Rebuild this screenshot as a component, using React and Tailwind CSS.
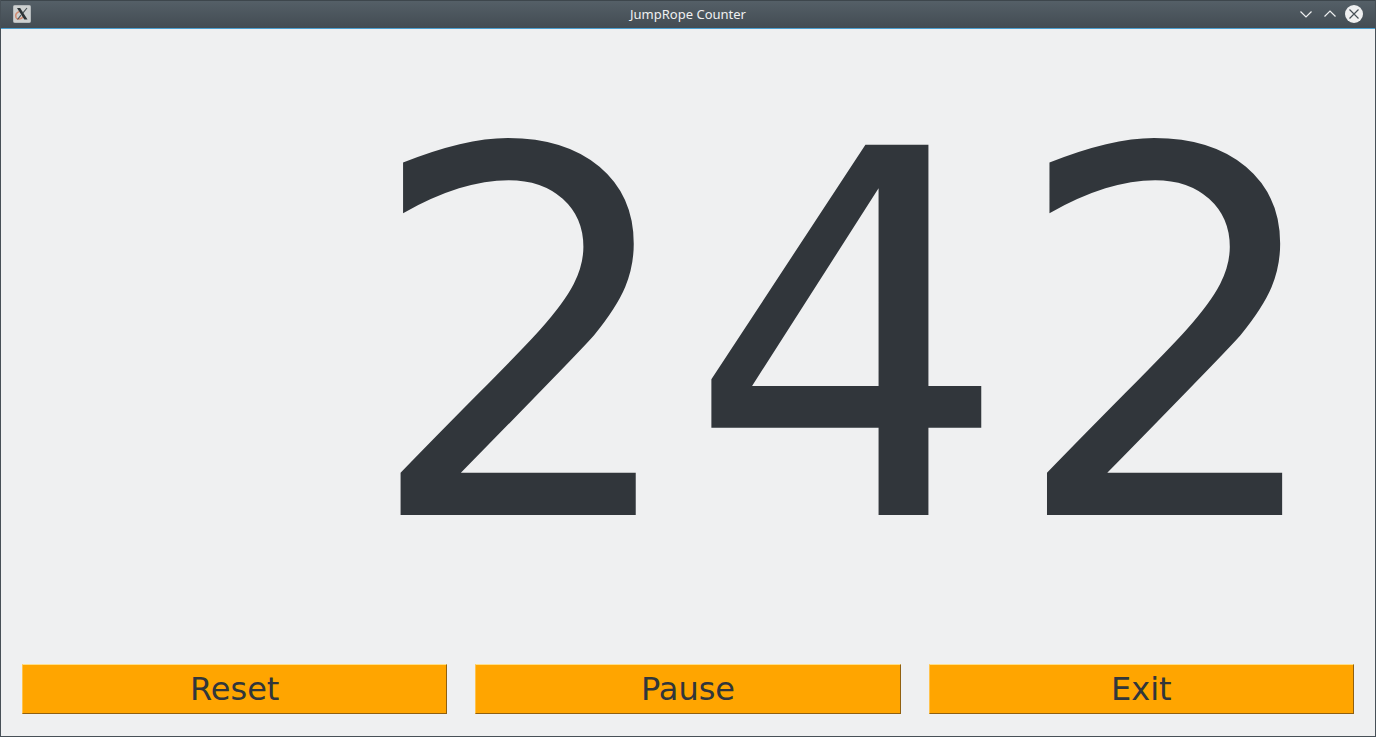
import { useState } from "react";

function AppIcon() {
  return (
    <svg className="size-[18px]" viewBox="0 0 18 18" aria-hidden="true">
      <rect x="0.5" y="0.5" width="17" height="17" rx="1" fill="#cdd0d0" stroke="#b4b9bb" />
      <path d="M6.5 6.5C3.5 7.5 2.2 10 3 12.5C4 15 8 14.5 10.5 11.5" fill="none" stroke="#d08a70" strokeWidth="1.5" />
      <path d="M4 3H7.2L14.5 14.5H11.3Z" fill="#2b3336" />
      <path d="M14 3L9.8 8.2M8 10.2L4.5 14.5" fill="none" stroke="#4a5356" strokeWidth="1.1" />
    </svg>
  );
}

function TitleBar({ title }) {
  return (
    <header className="grid h-[29px] grid-cols-[1fr_auto_1fr] items-center border-b border-[#4b9fd0] bg-linear-to-b from-[#556068] to-[#434c53] px-3 shadow-[inset_0_1px_0_#3d464c]">
      <AppIcon />
      <h1 className="font-['Noto_Sans',sans-serif] text-[13px] leading-[18px] text-[#eff0f1]">{title}</h1>
      <div className="flex items-center justify-end gap-1.5">
        <button type="button" aria-label="Minimize" className="size-[18px]">
          <svg viewBox="0 0 18 18" fill="none" stroke="#eff0f1" strokeWidth="1.2">
            <path d="M3.5 6.5L9 12L14.5 6.5" />
          </svg>
        </button>
        <button type="button" aria-label="Maximize" className="size-[18px]">
          <svg viewBox="0 0 18 18" fill="none" stroke="#eff0f1" strokeWidth="1.2">
            <path d="M3.5 11.5L9 6L14.5 11.5" />
          </svg>
        </button>
        <button type="button" aria-label="Close" className="size-[18px]">
          <svg viewBox="0 0 18 18" fill="none">
            <circle cx="9" cy="9" r="9" fill="#eff0f1" />
            <path d="M4.5 4.5L13.5 13.5M13.5 4.5L4.5 13.5" stroke="#475057" strokeWidth="1.2" />
          </svg>
        </button>
      </div>
    </header>
  );
}

function ActionButton({ children, onClick }) {
  return (
    <button
      type="button"
      onClick={onClick}
      className="flex-1 border border-t-[#ffe08a] border-r-[#906010] border-b-[#906010] border-l-[#ffc34d] bg-[#ffa500] py-1 text-[32px] leading-10 text-[#31363b]"
    >
      {children}
    </button>
  );
}

export default function App() {
  const [count, setCount] = useState(242);
  return (
    <div className="flex min-h-screen flex-col border border-t-0 border-[#475057] bg-[#eff0f1] font-['DejaVu_Sans',sans-serif] text-[#31363b]">
      <TitleBar title="JumpRope Counter" />
      <main className="flex flex-1 items-center justify-end pr-[42px]">
        <output className="text-[508px] leading-none">{count}</output>
      </main>
      <footer className="flex gap-7 px-[21px] pt-[15px] pb-[22px]">
        <ActionButton onClick={() => setCount(0)}>Reset</ActionButton>
        <ActionButton>Pause</ActionButton>
        <ActionButton>Exit</ActionButton>
      </footer>
    </div>
  );
}
